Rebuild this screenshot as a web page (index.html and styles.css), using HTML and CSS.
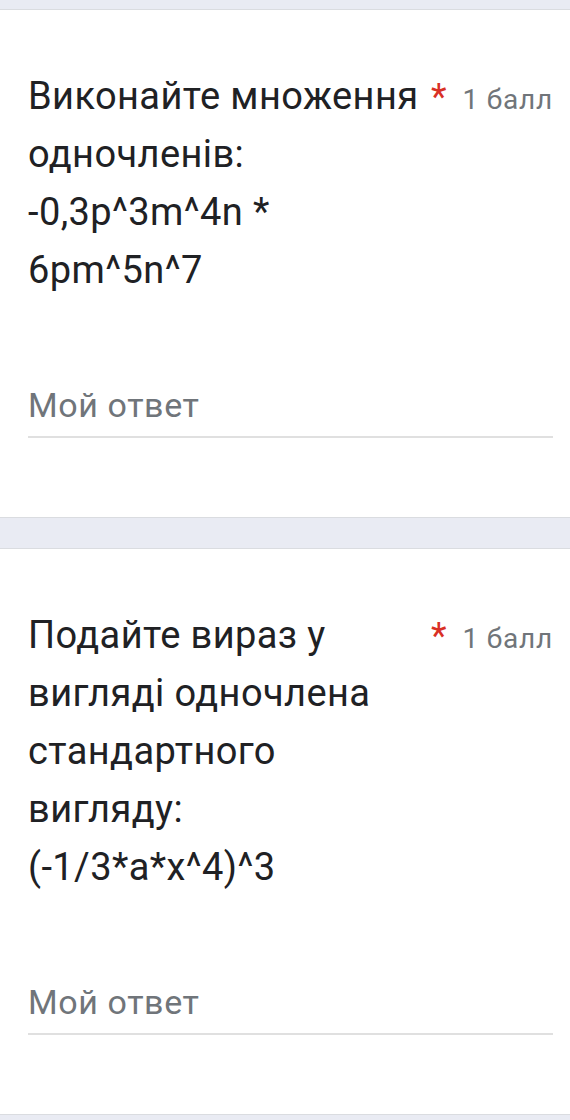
FILE: index.html
```html
<!DOCTYPE html>
<html lang="uk">
<head>
    <meta charset="UTF-8">
    <meta name="viewport" content="width=device-width, initial-scale=1.0">
    <title>Тест</title>
    <link rel="stylesheet" href="styles.css">
</head>
<body>
    <div class="form">
        <div class="card">
            <div class="question-head">
                <div class="question-title">Виконайте множення одночленів: -0,3p^3m^4n * 6pm^5n^7</div>
                <span class="required">*</span>
                <span class="points">1 балл</span>
            </div>
            <input class="answer" type="text" placeholder="Мой ответ">
        </div>

        <div class="card">
            <div class="question-head">
                <div class="question-title">Подайте вираз у вигляді одночлена стандартного вигляду: (-1/3*a*x^4)^3</div>
                <span class="required">*</span>
                <span class="points">1 балл</span>
            </div>
            <input class="answer" type="text" placeholder="Мой ответ">
        </div>
    </div>
</body>
</html>
```

FILE: styles.css
```css
body {
    margin: 0;
    font-family: Roboto, 'Noto Sans', Arial, sans-serif;
    background-color: #e9ebf3;
    color: #202124;
}
.form {
    padding: 9px 0 8px;
    display: flex;
    flex-direction: column;
    gap: 30px;
}
.card {
    background-color: #ffffff;
    border-top: 1px solid #dadce0;
    border-bottom: 1px solid #dadce0;
    padding: 57px 17px 79px 28px;
}
.question-head {
    display: flex;
    align-items: baseline;
}
.question-title {
    flex: 1;
    font-size: 38px;
    line-height: 58px;
    letter-spacing: 0.4px;
    color: #202124;
}
.required {
    color: #d93025;
    font-size: 36px;
    margin: 0 16px 0 7px;
}
.points {
    font-size: 28px;
    letter-spacing: 0.8px;
    color: #70757a;
}
.answer {
    display: block;
    width: 100%;
    box-sizing: border-box;
    margin-top: 86px;
    padding: 0 0 11px;
    border: none;
    border-bottom: 2px solid #e0e0e0;
    font-family: inherit;
    font-size: 34px;
    line-height: 40px;
    letter-spacing: 0.6px;
    color: #202124;
    background: transparent;
    outline: none;
}
.answer::placeholder {
    color: #70757a;
}
```
